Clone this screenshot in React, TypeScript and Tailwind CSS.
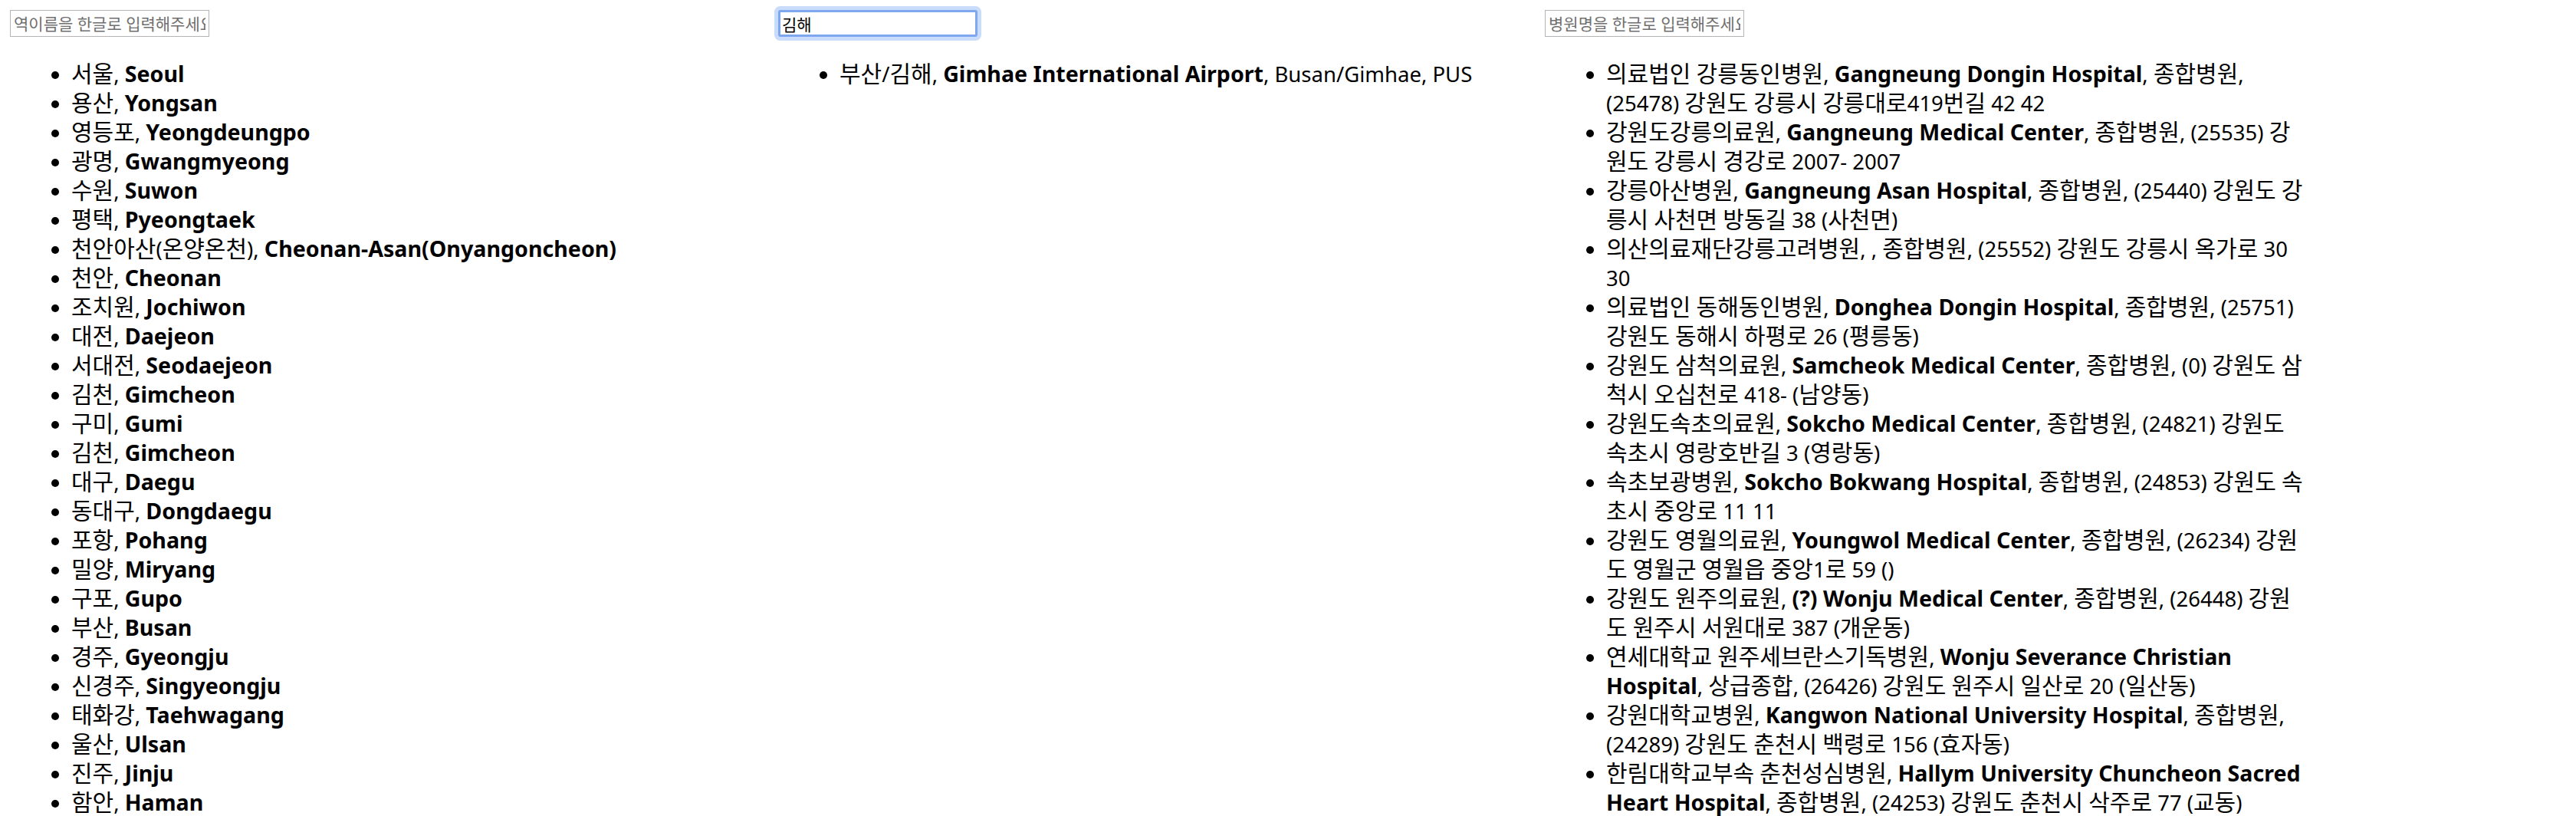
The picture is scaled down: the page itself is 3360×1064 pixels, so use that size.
import React from "react";

const STATIONS: { ko: string; en: string }[] = [
  { ko: "서울", en: "Seoul" },
  { ko: "용산", en: "Yongsan" },
  { ko: "영등포", en: "Yeongdeungpo" },
  { ko: "광명", en: "Gwangmyeong" },
  { ko: "수원", en: "Suwon" },
  { ko: "평택", en: "Pyeongtaek" },
  { ko: "천안아산(온양온천)", en: "Cheonan-Asan(Onyangoncheon)" },
  { ko: "천안", en: "Cheonan" },
  { ko: "조치원", en: "Jochiwon" },
  { ko: "대전", en: "Daejeon" },
  { ko: "서대전", en: "Seodaejeon" },
  { ko: "김천", en: "Gimcheon" },
  { ko: "구미", en: "Gumi" },
  { ko: "김천", en: "Gimcheon" },
  { ko: "대구", en: "Daegu" },
  { ko: "동대구", en: "Dongdaegu" },
  { ko: "포항", en: "Pohang" },
  { ko: "밀양", en: "Miryang" },
  { ko: "구포", en: "Gupo" },
  { ko: "부산", en: "Busan" },
  { ko: "경주", en: "Gyeongju" },
  { ko: "신경주", en: "Singyeongju" },
  { ko: "태화강", en: "Taehwagang" },
  { ko: "울산", en: "Ulsan" },
  { ko: "진주", en: "Jinju" },
  { ko: "함안", en: "Haman" },
];

const AIRPORTS = [{ ko: "부산/김해", en: "Gimhae International Airport", rest: "Busan/Gimhae, PUS" }];

const HOSPITALS = [
  { ko: "의료법인 강릉동인병원", en: "Gangneung Dongin Hospital", rest: "종합병원, (25478) 강원도 강릉시 강릉대로419번길 42 42" },
  { ko: "강원도강릉의료원", en: "Gangneung Medical Center", rest: "종합병원, (25535) 강원도 강릉시 경강로 2007- 2007" },
  { ko: "강릉아산병원", en: "Gangneung Asan Hospital", rest: "종합병원, (25440) 강원도 강릉시 사천면 방동길 38 (사천면)" },
  { ko: "의산의료재단강릉고려병원", en: "", rest: "종합병원, (25552) 강원도 강릉시 옥가로 30 30" },
  { ko: "의료법인 동해동인병원", en: "Donghea Dongin Hospital", rest: "종합병원, (25751) 강원도 동해시 하평로 26 (평릉동)" },
  { ko: "강원도 삼척의료원", en: "Samcheok Medical Center", rest: "종합병원, (0) 강원도 삼척시 오십천로 418- (남양동)" },
  { ko: "강원도속초의료원", en: "Sokcho Medical Center", rest: "종합병원, (24821) 강원도 속초시 영랑호반길 3 (영랑동)" },
  { ko: "속초보광병원", en: "Sokcho Bokwang Hospital", rest: "종합병원, (24853) 강원도 속초시 중앙로 11 11" },
  { ko: "강원도 영월의료원", en: "Youngwol Medical Center", rest: "종합병원, (26234) 강원도 영월군 영월읍 중앙1로 59 ()" },
  { ko: "강원도 원주의료원", en: "(?) Wonju Medical Center", rest: "종합병원, (26448) 강원도 원주시 서원대로 387 (개운동)" },
  { ko: "연세대학교 원주세브란스기독병원", en: "Wonju Severance Christian Hospital", rest: "상급종합, (26426) 강원도 원주시 일산로 20 (일산동)" },
  { ko: "강원대학교병원", en: "Kangwon National University Hospital", rest: "종합병원, (24289) 강원도 춘천시 백령로 156 (효자동)" },
  { ko: "한림대학교부속 춘천성심병원", en: "Hallym University Chuncheon Sacred Heart Hospital", rest: "종합병원, (24253) 강원도 춘천시 삭주로 77 (교동)" },
];

// hangul runs are set a little larger than the latin text around them
function Ko({ text }: { text: string }) {
  const parts = text.split(/([\uac00-\ud7a3]+)/);
  return (
    <>
      {parts.map((p, i) =>
        i % 2 === 1 ? (
          <span key={i} className="text-[30px] leading-none">
            {p}
          </span>
        ) : (
          p
        )
      )}
    </>
  );
}

function En({ children }: { children: React.ReactNode }) {
  return <b className="text-[28.6px] leading-none">{children}</b>;
}

function SearchBox({ placeholder, value, focused }: { placeholder: string; value?: string; focused?: boolean }) {
  return (
    <input
      readOnly
      value={value ?? ""}
      placeholder={placeholder}
      className={
        focused
          ? "block w-[260px] h-[35px] px-[2px] text-[21px] leading-normal text-black bg-white border-[3px] border-[#7ea7ef] rounded-[3px] shadow-[0_0_0_5px_#cadcfb] outline-none"
          : "block w-[260px] h-[35px] px-[4px] text-[21px] leading-normal text-black bg-white border border-[#b4b4b4] placeholder:text-[#6f6f6f] outline-none"
      }
    />
  );
}

export default function App() {
  return (
    <div className="flex items-start min-h-screen bg-white text-black font-['Noto_Sans','Noto_Sans_CJK_KR',sans-serif] text-[27.5px] leading-[38px]">
      {/* 역 */}
      <div className="w-[1002px] shrink-0 pl-[13px] pt-[13px]">
        <SearchBox placeholder="역이름을 한글로 입력해주세요" />
        <ul className="list-disc pl-[80px] mt-[29.5px]">
          {STATIONS.map((s, i) => (
            <li key={i}>
              <Ko text={s.ko} />, <En>{s.en}</En>
            </li>
          ))}
        </ul>
      </div>

      {/* 공항 */}
      <div className="w-[1000px] shrink-0 pl-[13px] pt-[13px]">
        <SearchBox placeholder="공항명을 한글로 입력해주세요" value="김해" focused />
        <ul className="list-disc pl-[80px] mt-[29.5px]">
          {AIRPORTS.map((a, i) => (
            <li key={i}>
              <Ko text={a.ko} />, <En>{a.en}</En>, {a.rest}
            </li>
          ))}
        </ul>
      </div>

      {/* 병원 */}
      <div className="w-[1002px] shrink-0 pl-[13px] pt-[13px]">
        <SearchBox placeholder="병원명을 한글로 입력해주세요" />
        <ul className="list-disc pl-[80px] mt-[29.5px]">
          {HOSPITALS.map((h, i) => (
            <li key={i}>
              <Ko text={h.ko} />, <En>{h.en}</En>, <Ko text={h.rest} />
            </li>
          ))}
        </ul>
      </div>
    </div>
  );
}
